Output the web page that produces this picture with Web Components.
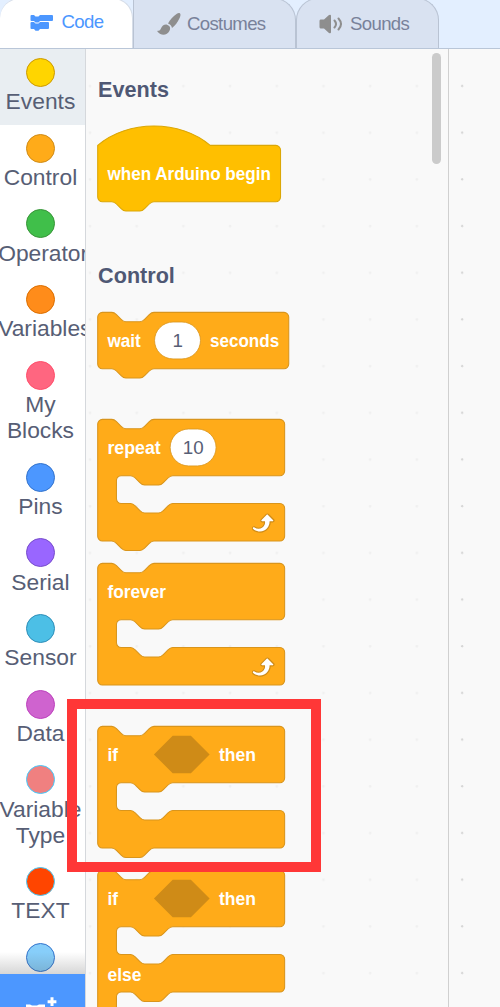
<!DOCTYPE html>
<html lang="en">
<head>
<meta charset="utf-8">
<title>Block editor</title>
<style>
html,body{margin:0;height:100%;overflow:hidden}
body{font-family:"Liberation Sans",Arial,sans-serif;color:#575e75}
</style>
</head>
<body>
<block-editor></block-editor>
<script>
const define=(name,html,render)=>{
  const t=document.createElement('template');t.innerHTML=html;
  customElements.define(name,class extends HTMLElement{
    constructor(){super();this.attachShadow({mode:'open'}).append(t.content.cloneNode(true));}
    connectedCallback(){if(render)render(this,this.shadowRoot);}
  });
};

define('editor-tab',`<style>
:host{display:flex;box-sizing:border-box;height:51px;margin-top:-2px;border:1.5px solid #b9c3d3;border-bottom:0;border-radius:0 22px 0 0;background:#d9e2f1;color:#78819a;font-size:18.6px;letter-spacing:-.65px;align-items:center;padding-top:0;white-space:nowrap}
:host([round]){border-radius:22px 22px 0 0}
:host([active]){background:#fff;color:#4c97ff;border-color:#d6dde8;border-left:0;border-radius:20px 20px 0 0;z-index:1;padding-bottom:4px}
::slotted(svg){flex:none}
:host([active]) ::slotted(svg){position:relative;top:1px}
</style><slot name="icon"></slot><span><slot></slot></span>`);

define('category-item',`<style>
:host{display:flex;flex-direction:column;align-items:center;box-sizing:border-box;padding:9px 2px 10.3px 0;font-size:22.8px;line-height:26.1px}
:host([active]){background:#e9eef2}
i{box-sizing:border-box;width:29px;height:29px;margin-left:-2px;border-radius:50%;background:var(--c);border:1.4px solid var(--b);flex:none}
div{width:84.6px;margin-left:-1.6px;text-align:center;margin-top:1.3px}
</style><i></i><div><slot></slot></div>`,(el)=>{
  el.style.setProperty('--c',el.getAttribute('color'));
  el.style.setProperty('--b',el.getAttribute('edge'));
});

define('palette-heading',`<style>:host{display:block;font-weight:bold;font-size:21.6px;line-height:28px;height:28px;color:#4f5874}</style><slot></slot>`);

const nd='c2,0 3,1 4,2l4,4c1,1 2,2 4,2h12c2,0 3,-1 4,-2l4,-4c1,-1 2,-2 4,-2';
const nl='c-2,0 -3,1 -4,2l-4,4c-1,1 -2,2 -4,2h-12c-2,0 -3,-1 -4,-2l-4,-4c-1,-1 -2,-2 -4,-2';
const S=1.172;
define('code-block',`<style>
:host{display:block}
svg{display:block;overflow:visible}
text{font:bold 16px "Liberation Sans",Arial,sans-serif;fill:#fff}
text.v{font-weight:normal;fill:#575e75;font-size:16px}
</style><svg><g></g></svg>`,(el,root)=>{
  const kind=el.getAttribute('kind'),w=+el.getAttribute('width'),fill=kind==='hat'?'#ffbf00':'#ffab19',edge=kind==='hat'?'#dba706':'#d9951c';
  const mouth=`H64${nl}h-8a4,4 0 0 0 -4,4v15.8a4,4 0 0 0 4,4h8${nd}H${w-4}a4,4 0 0 1 4,4v24a4,4 0 0 1 -4,4`;
  let h=48,d=kind==='hat'?`M0,0c25,-22 71,-22 96,0H${w-4}`:`M0,4A4,4 0 0 1 4,0H12${nd}H${w-4}`;
  d+='a4,4 0 0 1 4,4v40a4,4 0 0 1 -4,4';
  if(kind==='c'||kind==='cap'){d+=mouth;h=104;}
  if(kind==='double'){d+=mouth+mouth;h=160;}
  d+=(kind==='cap'?'':`H48${nl}`)+'H4a4,4 0 0 1 -4,-4z';
  let out=`<path d="${d}" fill="${fill}" stroke="${edge}" stroke-width=".9"/>`;
  for(const p of JSON.parse(el.getAttribute('parts'))){
    if(p.t)out+=`<text x="${p.x}" y="${p.y||29.4}" textLength="${p.w}" lengthAdjust="spacingAndGlyphs">${p.t}</text>`;
    if(p.v)out+=`<rect x="${p.x}" y="8.2" width="39.2" height="31.5" rx="15.8" fill="#fff" stroke="${edge}" stroke-width=".7"/><text class="v" x="${p.x+19.7}" y="29.6" text-anchor="middle">${p.v}</text>`;
    if(p.hex)out+=`<path d="M${p.x},24l16,-16h15.500l16,16l-16,16h-15.500z" fill="#cf8b17"/>`;
    if(p.loop)out+=`<g transform="translate(127.500,76)"><path fill="#cf8b17" d="M23.3,11c-0.3,0.6-0.9,1-1.5,1h-1.6c-0.1,1.3-0.5,2.5-1.1,3.6c-0.9,1.7-2.3,3.2-4.1,4.1c-1.7,0.9-3.6,1.2-5.5,0.9c-1.8-0.3-3.5-1.1-4.9-2.3c-0.7-0.7-0.7-1.9,0-2.6c0.6-0.6,1.6-0.7,2.3-0.2H7c0.9,0.6,1.9,0.9,2.9,0.9s1.9-0.3,2.7-0.9c1.1-0.8,1.8-2.1,1.8-3.5h-1.5c-0.9,0-1.7-0.7-1.7-1.7c0-0.4,0.2-0.9,0.5-1.2l4.4-4.4c0.7-0.6,1.7-0.6,2.4,0L23,9.2C23.5,9.7,23.6,10.4,23.3,11z"/><path fill="#fff" d="M21.8,11h-2.6c0,1.5-0.3,2.9-1,4.2c-0.8,1.6-2.1,2.8-3.7,3.6c-1.5,0.8-3.3,1.1-4.9,0.8c-1.6-0.2-3.2-1-4.4-2.1c-0.4-0.3-0.4-0.9-0.1-1.2c0.3-0.4,0.9-0.4,1.2-0.1c1,0.7,2.2,1.1,3.4,1.1s2.3-0.3,3.3-1c0.9-0.6,1.6-1.5,2-2.6c0.3-0.9,0.4-1.8,0.2-2.8h-2.4c-0.4,0-0.7-0.3-0.7-0.7c0-0.2,0.1-0.3,0.2-0.4l4.4-4.4c0.3-0.3,0.7-0.3,0.9,0L22,9.8c0.3,0.3,0.4,0.6,0.3,0.9S22,11,21.8,11z"/></g>`;
  }
  const svg=root.querySelector('svg');
  svg.setAttribute('width',w*S);svg.setAttribute('height',h*S);
  const g=root.querySelector('g');g.setAttribute('transform',`translate(-.3,.4) scale(${S})`);g.innerHTML=out;
});

define('block-editor',`<style>
:host{display:flex;flex-direction:column;width:500px;height:1007px;overflow:hidden;position:relative;background:#f9f9f9}
nav{display:flex;flex:none;height:48px;background:#e3efff;border-bottom:1px solid #b9c6d8;overflow:hidden}
.t1{width:133px;box-sizing:border-box;padding-left:30px;gap:7.500px}
.t2{width:163px;padding-left:23px;gap:6px}
.t3{width:143px;padding-left:22px;gap:7px}
main{display:flex;flex:1;min-height:0}
aside{position:relative;width:84.5px;flex:none;background:#fff;border-right:1px solid #d5d8dc;overflow:hidden}
.palette{position:relative;box-sizing:border-box;width:363px;padding:27px 0 0 12px;border-right:1.5px solid #d0d0d0;overflow:hidden;flex:none;background:radial-gradient(circle at 4px 37px,#f0f0f0 0,#f0f0f0 .8px,transparent 1.8px) 0 0/46.7px 46.7px}
palette-heading{padding-left:.6px}
.canvas{flex:1;background:radial-gradient(circle at 13.2px 37px,#d5d5d5 0,#d5d5d5 .8px,transparent 1.5px) 0 0/46.7px 46.7px}
.bar{position:absolute;right:7px;top:4px;width:9px;height:111px;border-radius:5px;background:#cbcbcb}
.fade{position:absolute;left:0;right:0;bottom:33px;height:22px;background:linear-gradient(transparent,rgba(70,70,70,.22))}
.add{position:absolute;left:0;right:-1px;bottom:0;height:33px;background:#4c97ff}
.add svg{display:block}
.mark{position:absolute;left:67px;top:699px;width:234px;height:153px;border:10px solid #ff3737}
</style>
<nav>
<editor-tab class="t1" active><svg slot="icon" width="24" height="18" viewBox="0 0 24 18" fill="#4c97ff"><path d="M1.500 1H4l1.500 1.500h3L10 1h12q1 0 1 1v4q0 1-1 1H10L8.500 8.500h-3L4 7H1.500Q.5 7 .5 6V2q0-1 1-1z"/><path d="M1.500 8H4l1.500 1.500h3L10 8h8q1 0 1 1v5q0 1-1 1h-8l-1.500 1.700h-3L4 15H1.500q-1 0-1-1V9q0-1 1-1z"/></svg>Code</editor-tab>
<editor-tab class="t2"><svg slot="icon" width="24" height="24" viewBox="0 0 24 24" fill="#8e8e8e"><path d="M22.800 1.200c1.200.8.700 2.800-.3 5-1.800 4-4.300 7.300-7.500 9.800-.4-2.200-1.700-3.800-4-4.500C13 7.500 16 4.200 19.500 1.900 21 1 22 .7 22.800 1.200z"/><path d="M10 12.700c2.800.8 4 3.300 2.500 6C10.200 23.500 4 24 .6 19.700c-.5-.7-.1-1.200.6-1 1.300.2 2-.5 2.600-1.900 1.200-3 3.500-4.600 6.200-4.100z"/></svg>Costumes</editor-tab>
<editor-tab class="t3" round><svg slot="icon" width="24" height="20" viewBox="0 0 24 20" fill="#8e8e8e"><path d="M1.500 5.500H5L10 1q2-1 2 1v16q0 2-2 1l-5-4.500H1.500Q.5 14 .5 13V7q0-1.500 1-1.500z"/><path d="M15.500 6.500q3 3.500 0 7M19.500 4.500q5 5.500 0 11" fill="none" stroke="#8e8e8e" stroke-width="2" stroke-linecap="round"/></svg>Sounds</editor-tab>
</nav>
<main>
<aside>
<category-item active color="#ffd500" edge="#cc9900">Events</category-item>
<category-item color="#ffab19" edge="#cf8b17">Control</category-item>
<category-item color="#40bf4a" edge="#389438">Operators</category-item>
<category-item color="#ff8c1a" edge="#db6e00">Variables</category-item>
<category-item color="#ff6680" edge="#ff4d6a">My Blocks</category-item>
<category-item color="#4c97ff" edge="#3373cc">Pins</category-item>
<category-item color="#9966ff" edge="#774dcb">Serial</category-item>
<category-item color="#4cbfe6" edge="#2e8eb8">Sensor</category-item>
<category-item color="#cf63cf" edge="#bd42bd">Data</category-item>
<category-item color="#f08080" edge="#42ccff">Variable Type</category-item>
<category-item color="#ff4500" edge="#42ccff">TEXT</category-item>
<category-item color="#87cefa" edge="#3373cc"></category-item>
<div class="fade"></div>
<div class="add"><svg width="86" height="33" viewBox="0 0 86 33" fill="#fff"><path d="M50.500 23.300h3v2.900h2.900v3h-2.900v2.900h-3v-2.900h-2.900v-3h2.900z"/><path d="M26 30.500h4l2 1h5l2-1h6V33H26z"/></svg></div>
</aside>
<section class="palette">
<palette-heading>Events</palette-heading>
<code-block style="margin-top:41px" kind="hat" width="156" parts='[{"t":"when Arduino begin","x":8.300,"w":139.500}]'></code-block>
<palette-heading style="margin-top:61px">Control</palette-heading>
<code-block style="margin-top:22px" kind="stack" width="163" parts='[{"t":"wait","x":8.300,"w":28.500},{"v":"1","x":48.500},{"t":"seconds","x":95.800,"w":59}]'></code-block>
<code-block style="margin-top:50.200px" kind="c" width="159.500" parts='[{"t":"repeat","x":8.300,"w":45.500},{"v":"10","x":61.800},{"loop":1}]'></code-block>
<code-block style="margin-top:22.600px" kind="cap" width="159.500" parts='[{"t":"forever","x":8.300,"w":50},{"loop":1}]'></code-block>
<code-block style="margin-top:41px" kind="c" width="159.500" parts='[{"t":"if","x":8.300,"w":9},{"hex":1,"x":48},{"t":"then","x":103.500,"w":31.500}]'></code-block>
<code-block style="margin-top:22.200px" kind="double" width="159.500" parts='[{"t":"if","x":8.300,"w":9},{"hex":1,"x":48},{"t":"then","x":103.500,"w":31.500},{"t":"else","x":8.300,"y":94.300,"w":29}]'></code-block>
<div class="bar"></div>
</section>
<section class="canvas"></section>
</main>
<div class="mark"></div>`);
</script>
</body>
</html>
